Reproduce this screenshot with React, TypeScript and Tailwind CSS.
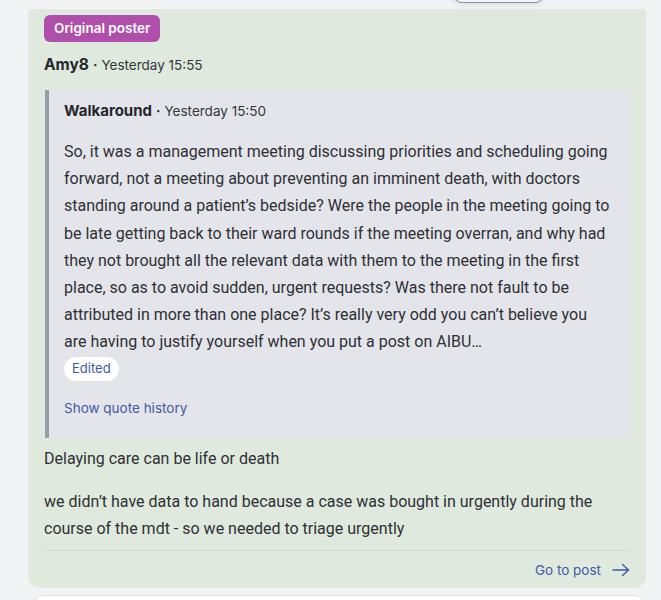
import React from "react";

const quoteLines = [
  "So, it was a management meeting discussing priorities and scheduling going",
  "forward, not a meeting about preventing an imminent death, with doctors",
  "standing around a patient’s bedside? Were the people in the meeting going to",
  "be late getting back to their ward rounds if the meeting overran, and why had",
  "they not brought all the relevant data with them to the meeting in the first",
  "place, so as to avoid sudden, urgent requests? Was there not fault to be",
  "attributed in more than one place? It’s really very odd you can’t believe you",
  "are having to justify yourself when you put a post on AIBU…",
];

export default function App() {
  const font = { fontFamily: "Inter, 'Noto Sans', sans-serif" };
  const body = { fontFamily: "Roboto, 'Liberation Sans', sans-serif" };
  return (
    <div className="relative h-[600px] w-[661px] overflow-hidden bg-[#f2f3f5] text-[#2a2b30]" style={font}>
      <div className="absolute left-[452px] top-[-20px] h-[23px] w-[93px] rounded-[10px] border border-[#8f9096] bg-[#f4f4f6] shadow-[0_2px_6px_rgba(0,0,0,0.08)]" />
      <div className="pt-[9px] pl-[28px] pr-[15px]">
        <div className="rounded-t-[4px] rounded-b-[12px] bg-[#dfe9de] px-4 pt-[6px] pb-[8px]">
          <div className="flex">
            <span className="flex h-[27px] items-center rounded-[6px] bg-[#b04fab] px-[10px] text-[13.5px] font-semibold text-white">
              Original poster
            </span>
          </div>
          <div className="mt-[13px] flex h-[20px] items-center text-[13.5px]">
            <span className="text-[15.5px] font-bold text-[#26272c]">Amy8</span>
            <span className="mx-[4px] font-bold">·</span>
            <span className="text-[#35363b]">Yesterday 15:55</span>
          </div>
          <div className="mt-[15px] mr-[-2px] ml-[1px] border-l-4 border-[#9b9ca6] bg-[#e4e5ea] pl-[15px] pr-3 pt-[11px] pb-[20px]">
            <div className="flex h-[20px] items-center text-[13.5px]">
              <span className="text-[15px] font-bold text-[#26272c]">Walkaround</span>
              <span className="mx-[4px] font-bold">·</span>
              <span className="text-[#35363b]">Yesterday 15:50</span>
            </div>
            <p className="mt-[17px] text-[16px] leading-[27.2px] text-[#2f3035]" style={body}>
              {quoteLines.map((l, i) => (
                <span key={i} className="block whitespace-nowrap">
                  {l}
                </span>
              ))}
            </p>
            <div className="mt-[1px] flex">
              <span className="flex h-[24px] items-center rounded-full bg-white px-[8px] text-[13px] text-[#3f5aa6]">
                Edited
              </span>
            </div>
            <div className="mt-[17px] flex h-[20px] items-center text-[13.5px] text-[#3f5aa6]">Show quote history</div>
          </div>
          <div className="mt-[7px] text-[16px] leading-[27.2px] text-[#2f3035]" style={body}>
            <p>Delaying care can be life or death</p>
            <p className="mt-[16px]">
              <span className="block whitespace-nowrap">
                we didn’t have data to hand because a case was bought in urgently during the
              </span>
              <span className="block whitespace-nowrap">course of the mdt - so we needed to triage urgently</span>
            </p>
          </div>
          <div className="mt-[8px] border-t border-[#cfdccf]" />
          <div className="mt-[9px] flex h-[20px] items-center justify-end text-[13.5px] text-[#3f5aa6]">
            <span>Go to post</span>
            <svg className="ml-[11px]" width="18" height="14" viewBox="0 0 18 14" fill="none" stroke="#3f5aa6" strokeWidth="1.4" strokeLinecap="round" strokeLinejoin="round">
              <path d="M1 7h15.5M10.5 1.5 16.5 7l-6 5.5" />
            </svg>
          </div>
        </div>
        <div className="mt-[7px] ml-[4px] h-[40px] rounded-t-[12px] border border-[#e3e4e8] bg-white" />
      </div>
    </div>
  );
}
